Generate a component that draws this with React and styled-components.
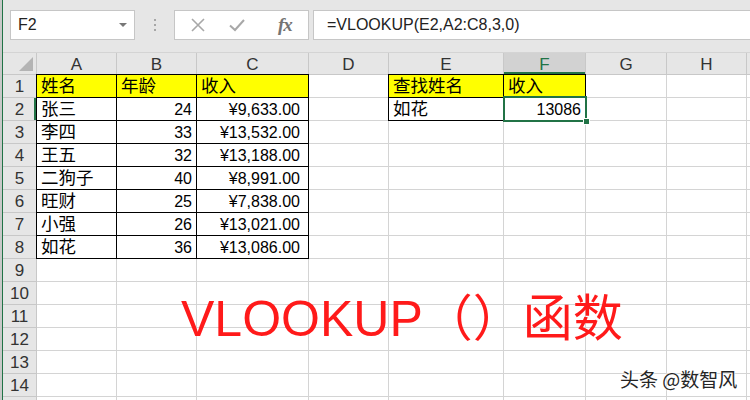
import styled, { createGlobalStyle } from "styled-components";

const GlobalStyle = createGlobalStyle`
  html, body {
    margin: 0;
    padding: 0;
    background: #ffffff;
  }
  body {
    font-family: "Liberation Sans", "Noto Sans CJK SC", sans-serif;
    color: #000;
  }
`;

const COLS = [80, 80, 112, 80, 115, 82, 81, 80];
const LETTERS = ["A", "B", "C", "D", "E", "F", "G", "H"];
const YELLOW = "#ffff00";
const GREEN = "#217346";

const people = [
  ["张三", 24, "¥9,633.00"],
  ["李四", 33, "¥13,532.00"],
  ["王五", 32, "¥13,188.00"],
  ["二狗子", 40, "¥8,991.00"],
  ["旺财", 25, "¥7,838.00"],
  ["小强", 26, "¥13,021.00"],
  ["如花", 36, "¥13,086.00"],
];

const Page = styled.div`
  width: 750px;
  height: 400px;
  overflow: hidden;
  display: flex;
  position: relative;
`;

const WindowEdge = styled.div`
  width: 2px;
  background: #c9c9c9;
  border-right: 1px solid ${GREEN};
  flex: none;
`;

const Main = styled.div`
  flex: 1;
  display: flex;
  flex-direction: column;
  min-width: 0;
`;

const FormulaBar = styled.div`
  flex: none;
  height: 53px;
  box-sizing: border-box;
  background: #e6e6e6;
  border-bottom: 1px solid #d4d4d4;
  display: flex;
  align-items: flex-start;
  padding: 10px 0 0 7px;
`;

const NameBox = styled.div`
  width: 125px;
  height: 30px;
  box-sizing: border-box;
  background: #fff;
  border: 1px solid #c6c6c6;
  display: flex;
  align-items: center;
  justify-content: space-between;
  padding: 0 7px 0 7px;
  font-size: 16px;
  color: #222;
`;

const DropArrow = styled.span`
  width: 0;
  height: 0;
  border-left: 4px solid transparent;
  border-right: 4px solid transparent;
  border-top: 4px solid #777;
`;

const Grip = styled.div`
  width: 39px;
  height: 30px;
  display: flex;
  flex-direction: column;
  align-items: center;
  justify-content: center;
  gap: 3px;
  span {
    width: 2px;
    height: 2px;
    background: #a6a6a6;
  }
`;

const ButtonBox = styled.div`
  width: 135px;
  height: 30px;
  box-sizing: border-box;
  background: #fff;
  border: 1px solid #c6c6c6;
  display: flex;
  align-items: center;
  padding-left: 15px;
  gap: 22px;
`;

const Fx = styled.span`
  font-family: "Liberation Serif", serif;
  font-style: italic;
  font-weight: bold;
  font-size: 19px;
  color: #747474;
  margin-left: 10px;
  letter-spacing: -1px;
`;

const FormulaInput = styled.div`
  flex: 1;
  height: 30px;
  margin-left: 4px;
  box-sizing: border-box;
  background: #fff;
  border: 1px solid #c6c6c6;
  border-right: none;
  display: flex;
  align-items: center;
  padding-left: 13px;
  font-size: 16px;
  color: #222;
`;

const Sheet = styled.div`
  flex: none;
  display: grid;
  grid-template-columns: 34px ${COLS.map((c) => c + "px").join(" ")} 1fr;
  grid-template-rows: 22px;
  grid-auto-rows: 23px;
  font-size: 16px;
`;

const HeadCell = styled.div`
  box-sizing: border-box;
  background: ${(p) => (p.$active ? "#d2d2d2" : "#e6e6e6")};
  color: ${(p) => (p.$active ? GREEN : "#333")};
  border-right: 1px solid #c8c8c8;
  border-bottom: 1px solid #c8c8c8;
  box-shadow: ${(p) => (p.$active ? `inset 0 -2px 0 ${GREEN}` : "none")};
  display: flex;
  align-items: center;
  justify-content: center;
  line-height: 1;
  padding-top: 1px;
  font-size: 17px;
`;

const Corner = styled(HeadCell)`
  position: relative;
  &::after {
    content: "";
    position: absolute;
    right: 3px;
    bottom: 3px;
    border-left: 14px solid transparent;
    border-bottom: 14px solid #b4b4b4;
  }
`;

const RowHead = styled.div`
  box-sizing: border-box;
  background: #e6e6e6;
  color: #333;
  border-bottom: 1px solid #c8c8c8;
  border-right: 1px solid #c8c8c8;
  box-shadow: ${(p) => (p.$active ? `inset -2px 0 0 ${GREEN}` : "none")};
  display: flex;
  align-items: center;
  justify-content: center;
  padding-top: 2px;
  font-size: 17px;
`;

const edgeShadow = (p) => {
  const s = [];
  if (p.$edgeLeft) s.push("-1px 0 0 #000");
  if (p.$edgeTop) s.push("0 -1px 0 #000");
  if (p.$edgeLeft && p.$edgeTop) s.push("-1px -1px 0 #000");
  return s.length ? s.join(", ") : "none";
};

const Cell = styled.div`
  position: relative;
  box-sizing: border-box;
  background: ${(p) => p.$fill || "#fff"};
  border-right: 1px solid ${(p) => (p.$boxed ? "#000" : "#d4d4d4")};
  border-bottom: 1px solid ${(p) => (p.$boxed ? "#000" : "#d4d4d4")};
  box-shadow: ${edgeShadow};
  text-align: ${(p) => p.$align || "left"};
  padding: 0 ${(p) => (p.$money ? "8px" : "4px")} 0 4px;
  font-size: ${(p) => (p.$cjk ? "17.5px" : "16px")};
  line-height: 23px;
  white-space: nowrap;
  color: #000;
  z-index: ${(p) => (p.$selected ? 2 : "auto")};
`;

const Selection = styled.div`
  position: absolute;
  top: -2px;
  left: -1px;
  right: -2px;
  bottom: -2px;
  border: 2px solid ${GREEN};
  pointer-events: none;
  &::after {
    content: "";
    position: absolute;
    right: -5px;
    bottom: -5px;
    width: 5px;
    height: 5px;
    background: ${GREEN};
    border: 1px solid #fff;
  }
`;

const Title = styled.div`
  position: absolute;
  left: 181px;
  top: 294px;
  font-family: "Liberation Sans", "Noto Sans CJK SC", sans-serif;
  font-size: 50px;
  line-height: 1;
  color: #ff1a1a;
  white-space: nowrap;
`;

const Watermark = styled.div`
  position: absolute;
  left: 620px;
  top: 369px;
  font-family: "Noto Sans CJK SC", sans-serif;
  font-size: 19px;
  line-height: 1;
  color: #262626;
  text-shadow: 0 0 2px #fff, 0 0 2px #fff, 0 0 1px #fff;
  white-space: nowrap;
`;

const isCjk = (t) => typeof t === "string" && /[\u4e00-\u9fff]/.test(t);

const buildRows = () => {
  const rows = [];
  for (let r = 1; r <= 15; r++) {
    const cells = Array.from({ length: 9 }, () => ({ text: "" }));
    if (r <= 8) {
      for (let c = 0; c < 3; c++) {
        cells[c] = {
          text: "",
          boxed: true,
          edgeLeft: c === 0,
          edgeTop: r === 1,
          fill: r === 1 ? YELLOW : null,
        };
      }
      if (r === 1) {
        cells[0].text = "姓名";
        cells[1].text = "年龄";
        cells[2].text = "收入";
      } else {
        const [name, age, pay] = people[r - 2];
        cells[0].text = name;
        cells[1] = { ...cells[1], text: age, align: "right" };
        cells[2] = { ...cells[2], text: pay, align: "right", money: true };
      }
    }
    if (r <= 2) {
      for (let c = 4; c < 6; c++) {
        cells[c] = {
          text: "",
          boxed: true,
          edgeLeft: c === 4,
          edgeTop: r === 1,
          fill: r === 1 ? YELLOW : null,
        };
      }
      if (r === 1) {
        cells[4].text = "查找姓名";
        cells[5].text = "收入";
      } else {
        cells[4].text = "如花";
        cells[5] = { ...cells[5], text: "13086", align: "right", selected: true };
      }
    }
    rows.push(cells);
  }
  return rows;
};

export default function App() {
  const rows = buildRows();
  return (
    <>
      <GlobalStyle />
      <Page>
        <WindowEdge />
        <Main>
          <FormulaBar>
            <NameBox>
              F2
              <DropArrow />
            </NameBox>
            <Grip>
              <span />
              <span />
              <span />
            </Grip>
            <ButtonBox>
              <svg width="16" height="16" viewBox="0 0 16 16">
                <path d="M2 2 L14 14 M14 2 L2 14" stroke="#a8a8a8" strokeWidth="1.6" fill="none" />
              </svg>
              <svg width="18" height="16" viewBox="0 0 18 16">
                <path d="M2 8.5 L7 13 L16 3" stroke="#a8a8a8" strokeWidth="2" fill="none" />
              </svg>
              <Fx>fx</Fx>
            </ButtonBox>
            <FormulaInput>=VLOOKUP(E2,A2:C8,3,0)</FormulaInput>
          </FormulaBar>

          <Sheet>
            <Corner />
            {LETTERS.map((l) => (
              <HeadCell key={l} $active={l === "F"}>
                {l}
              </HeadCell>
            ))}
            <HeadCell />
            {rows.map((cells, i) => [
              <RowHead key={"h" + i} $active={i === 1}>
                {i < 14 ? i + 1 : ""}
              </RowHead>,
              ...cells.map((c, j) => (
                <Cell
                  key={i + "-" + j}
                  $boxed={c.boxed}
                  $edgeLeft={c.edgeLeft}
                  $edgeTop={c.edgeTop}
                  $fill={c.fill}
                  $align={c.align}
                  $money={c.money}
                  $cjk={isCjk(c.text)}
                  $selected={c.selected}
                >
                  {c.text}
                  {c.selected && <Selection />}
                </Cell>
              )),
            ])}
          </Sheet>
        </Main>
        <Title>VLOOKUP（）函数</Title>
        <Watermark>头条 @数智风</Watermark>
      </Page>
    </>
  );
}
